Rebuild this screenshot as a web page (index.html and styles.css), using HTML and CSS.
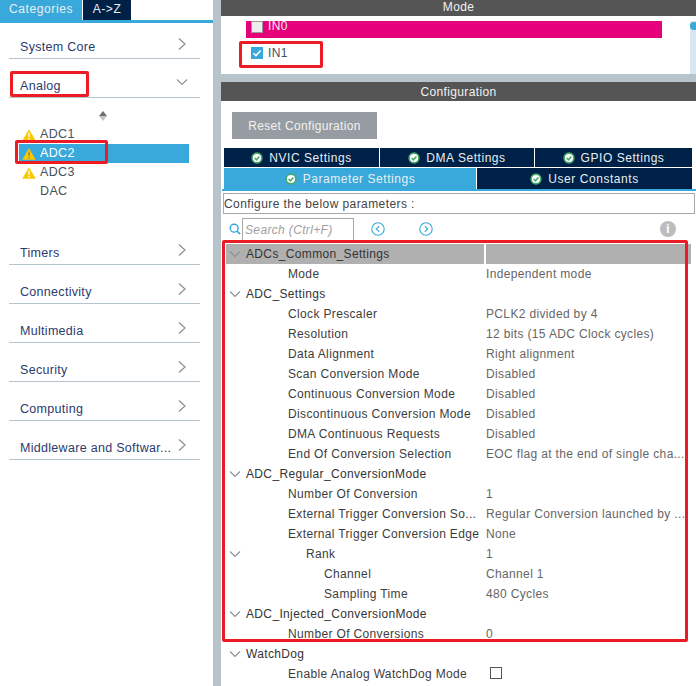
FILE: index.html
```html
<!DOCTYPE html>
<html lang="en">
<head>
<meta charset="UTF-8" />
<title>Pinout and Configuration</title>
<link rel="stylesheet" href="styles.css">
</head>
<body>
<svg class="defs" width="0" height="0">
  <symbol id="chev-right" viewBox="0 0 10 14"><path d="M2 1.5 8 7 2 12.5" fill="none" stroke="#8a8f94" stroke-width="1.2"/></symbol>
  <symbol id="chev-down" viewBox="0 0 12 8"><path d="M1 1.5 6 6.5 11 1.5" fill="none" stroke="#8a8f94" stroke-width="1.1"/></symbol>
  <symbol id="warn" viewBox="0 0 14 12"><path d="M7 .3 13.8 11.7H.2Z" fill="#fbc800"/><path d="M6.3 3.4h1.4v4.6H6.3ZM6.3 9h1.4v1.5H6.3Z" fill="currentColor"/></symbol>
  <symbol id="ok" viewBox="0 0 12 12"><circle cx="6" cy="6" r="4.9" fill="#fff" stroke="#45a86a" stroke-width="1.6"/><path d="M3.6 6 5.4 7.8 8.4 4.4" fill="none" stroke="#45a86a" stroke-width="1.5"/></symbol>
</svg>

<div class="sidebar">
  <div class="side-tabs">
    <div class="side-tab active">Categories</div>
    <div class="side-tab">A-&gt;Z</div>
  </div>
  <div class="cat first"><span>System Core</span><svg class="chev"><use href="#chev-right"/></svg></div>
  <div class="cat"><span>Analog</span><svg class="chev-d"><use href="#chev-down"/></svg></div>
  <div class="sort"><i class="up"></i><i class="down"></i></div>
  <ul class="ip-list">
    <li><svg class="warn"><use href="#warn"/></svg>ADC1</li>
    <li class="selected"><svg class="warn"><use href="#warn"/></svg>ADC2</li>
    <li><svg class="warn"><use href="#warn"/></svg>ADC3</li>
    <li>DAC</li>
  </ul>
  <div class="cat"><span>Timers</span><svg class="chev"><use href="#chev-right"/></svg></div>
  <div class="cat"><span>Connectivity</span><svg class="chev"><use href="#chev-right"/></svg></div>
  <div class="cat"><span>Multimedia</span><svg class="chev"><use href="#chev-right"/></svg></div>
  <div class="cat"><span>Security</span><svg class="chev"><use href="#chev-right"/></svg></div>
  <div class="cat"><span>Computing</span><svg class="chev"><use href="#chev-right"/></svg></div>
  <div class="cat"><span>Middleware and Softwar...</span><svg class="chev"><use href="#chev-right"/></svg></div>
</div>

<div class="main">
  <div class="bar mode-bar">Mode</div>
  <div class="mode-panel">
    <div class="in-row in0"><span class="box"></span><span class="in0-label">IN0</span></div>
    <div class="in-row in1"><span class="box checked"><svg viewBox="0 0 12 12"><path d="M2.5 6.2 5 8.6 9.6 3.4" fill="none" stroke="#fff" stroke-width="1.5"/></svg></span>IN1</div>
    <div class="scroll-track"><span class="scroll-thumb"></span></div>
  </div>
  <div class="bar config-bar">Configuration</div>
  <div class="config">
    <div class="reset-btn">Reset Configuration</div>
    <div class="tab-block">
      <div class="tabs tabs-top">
        <div class="tab w-a"><svg class="ok"><use href="#ok"/></svg>NVIC Settings</div>
        <div class="tab w-b"><svg class="ok"><use href="#ok"/></svg>DMA Settings</div>
        <div class="tab w-c"><svg class="ok"><use href="#ok"/></svg>GPIO Settings</div>
      </div>
      <div class="tabs tabs-bottom">
        <div class="tab active w-d"><svg class="ok"><use href="#ok"/></svg>Parameter Settings</div>
        <div class="tab w-e"><svg class="ok"><use href="#ok"/></svg>User Constants</div>
      </div>
    </div>
    <div class="describe">Configure the below parameters :</div>
    <div class="search-row">
      <svg class="search-icon" viewBox="0 0 14 14"><circle cx="6" cy="6" r="4.6" fill="none" stroke="#39a9db" stroke-width="1.6"/><path d="M9.2 9.2 13 13" stroke="#39a9db" stroke-width="1.8"/></svg>
      <div class="search-box">Search (Ctrl+F)</div>
      <svg class="nav prev" viewBox="0 0 14 14"><circle cx="7" cy="7" r="6.2" fill="none" stroke="#39a9db" stroke-width="1.1"/><path d="M8.2 4.2 5.4 7 8.2 9.8" fill="none" stroke="#39a9db" stroke-width="1.2"/></svg>
      <svg class="nav next" viewBox="0 0 14 14"><circle cx="7" cy="7" r="6.2" fill="none" stroke="#39a9db" stroke-width="1.1"/><path d="M5.8 4.2 8.6 7 5.8 9.8" fill="none" stroke="#39a9db" stroke-width="1.2"/></svg>
      <div class="info">i</div>
    </div>
    <div class="tree">
      <div class="row group head"><svg class="tw"><use href="#chev-down"/></svg><span class="name">ADCs_Common_Settings</span><span class="val"></span></div>
      <div class="row"><span class="name l1">Mode</span><span class="val">Independent mode</span></div>
      <div class="row group"><svg class="tw"><use href="#chev-down"/></svg><span class="name">ADC_Settings</span></div>
      <div class="row"><span class="name l1">Clock Prescaler</span><span class="val">PCLK2 divided by 4</span></div>
      <div class="row"><span class="name l1">Resolution</span><span class="val">12 bits (15 ADC Clock cycles)</span></div>
      <div class="row"><span class="name l1">Data Alignment</span><span class="val">Right alignment</span></div>
      <div class="row"><span class="name l1">Scan Conversion Mode</span><span class="val">Disabled</span></div>
      <div class="row"><span class="name l1">Continuous Conversion Mode</span><span class="val">Disabled</span></div>
      <div class="row"><span class="name l1">Discontinuous Conversion Mode</span><span class="val">Disabled</span></div>
      <div class="row"><span class="name l1">DMA Continuous Requests</span><span class="val">Disabled</span></div>
      <div class="row"><span class="name l1">End Of Conversion Selection</span><span class="val">EOC flag at the end of single cha...</span></div>
      <div class="row group"><svg class="tw"><use href="#chev-down"/></svg><span class="name">ADC_Regular_ConversionMode</span></div>
      <div class="row"><span class="name l1">Number Of Conversion</span><span class="val">1</span></div>
      <div class="row"><span class="name l1">External Trigger Conversion So...</span><span class="val">Regular Conversion launched by ...</span></div>
      <div class="row"><span class="name l1">External Trigger Conversion Edge</span><span class="val">None</span></div>
      <div class="row"><svg class="tw"><use href="#chev-down"/></svg><span class="name l2">Rank</span><span class="val">1</span></div>
      <div class="row"><span class="name l3">Channel</span><span class="val">Channel 1</span></div>
      <div class="row"><span class="name l3">Sampling Time</span><span class="val">480 Cycles</span></div>
      <div class="row group"><svg class="tw"><use href="#chev-down"/></svg><span class="name">ADC_Injected_ConversionMode</span></div>
      <div class="row"><span class="name l1">Number Of Conversions</span><span class="val">0</span></div>
      <div class="row group"><svg class="tw"><use href="#chev-down"/></svg><span class="name">WatchDog</span></div>
      <div class="row"><span class="name l1">Enable Analog WatchDog Mode</span><span class="val"><span class="plain-check"></span></span></div>
    </div>
  </div>
</div>

<div class="mark mark-analog"></div>
<div class="mark mark-adc2"></div>
<div class="mark mark-in1"></div>
<div class="mark mark-table"></div>
</body>
</html>
```

FILE: styles.css
```css
html, body {
  margin: 0;
  height: 686px;
  overflow: hidden;
}
body {
  position: relative;
  display: flex;
  background-color: #b8c4cc;
  font-family: "Liberation Sans", Arial, sans-serif;
  font-size: 12px;
  letter-spacing: 0.35px;
  color: #333;
}
.defs {
  position: absolute;
}

/* left panel */
.sidebar {
  width: 213px;
  height: 686px;
  margin-right: 8px;
  flex-shrink: 0;
  background-color: #fff;
}
.side-tabs {
  display: flex;
  gap: 1px;
  height: 20px;
  border-bottom: 3px solid #39a9db;
}
.side-tab {
  width: 48px;
  background-color: #002147;
  color: #e8eef2;
  line-height: 19px;
  text-align: center;
  letter-spacing: 0.6px;
}
.side-tab.active {
  width: 82px;
  background-color: #39a9db;
}
.cat {
  display: flex;
  justify-content: space-between;
  align-items: center;
  box-sizing: border-box;
  width: 191px;
  height: 39px;
  margin-left: 9px;
  padding: 16px 13px 0 11px;
  border-bottom: 1px solid #b8c4cc;
  color: #2c3a6e;
  font-size: 12.5px;
  letter-spacing: 0.3px;
}
.cat.first {
  height: 36px;
  padding-top: 13px;
}
.chev {
  width: 10px;
  height: 14px;
  margin-top: -6px;
}
.chev-d {
  width: 12px;
  height: 8px;
  margin-top: -8px;
  margin-right: -1px;
}
.sort {
  display: flex;
  flex-direction: column;
  align-items: center;
  width: 8px;
  height: 10px;
  margin: 13px 0 0 99px;
}
.sort i {
  width: 0;
  height: 0;
  border-left: 4px solid transparent;
  border-right: 4px solid transparent;
}
.sort .up {
  border-bottom: 5px solid #707070;
}
.sort .down {
  border-top: 5px solid #c4c4c4;
}
.ip-list {
  list-style: none;
  margin: 4px 0 25px 19px;
  padding: 0;
  width: 170px;
}
.ip-list li {
  display: flex;
  align-items: center;
  box-sizing: border-box;
  height: 19px;
  padding: 0 0 2px 21px;
  position: relative;
  color: #44505c;
  font-size: 12.5px;
}
.ip-list li.selected {
  background-color: #39a9db;
  color: #fff;
}
.warn {
  position: absolute;
  left: 3px;
  top: 4px;
  width: 14px;
  height: 12px;
  color: #fff;
}
.selected .warn {
  color: #9a8a3a;
}

/* right panel */
.main {
  width: 475px;
  height: 686px;
}
.bar {
  background-color: #555;
  color: #f2f2f2;
  text-align: center;
}
.mode-bar {
  height: 16px;
  line-height: 15px;
}
.config-bar {
  height: 19px;
  line-height: 21px;
}
.mode-panel {
  position: relative;
  display: flow-root;
  height: 58px;
  margin-bottom: 8px;
  background-color: #fff;
}
.in-row {
  display: flex;
  align-items: center;
  gap: 5px;
  color: #44505c;
}
.in0 {
  height: 17px;
  margin: 5px 34px 0 25px;
  padding-left: 5px;
  background-color: #e6007a;
  color: #eee;
  align-items: flex-start;
}
.in0-label {
  line-height: 11px;
}
.in1 {
  height: 16px;
  margin: 7px 0 0 30px;
}
.box {
  box-sizing: border-box;
  width: 12px;
  height: 12px;
  background-color: #eee;
  border: 1px solid #999;
}
.box.checked {
  background-color: #39a9db;
  border: 0;
}
.box svg {
  display: block;
}
.scroll-track {
  position: absolute;
  right: 0;
  top: 5px;
  bottom: 0;
  width: 6px;
  background-color: #d8e6f4;
  overflow: hidden;
}
.scroll-thumb {
  display: block;
  width: 8px;
  height: 8px;
  margin-top: 1px;
  background-color: #39a9db;
  border-radius: 50%;
}
.config {
  height: 585px;
  background-color: #fff;
  overflow: hidden;
}
.reset-btn {
  width: 145px;
  height: 27px;
  margin: 11px 0 9px 11px;
  background-color: #969ca1;
  color: #f2f2f2;
  line-height: 29px;
  text-align: center;
}
.tab-block {
  margin-left: 1px;
  padding-left: 2px;
  border-bottom: 2px solid #39a9db;
}
.tabs {
  display: flex;
  gap: 1px;
  width: 468px;
  color: #e8eef2;
  letter-spacing: 0.55px;
}
.tab {
  display: flex;
  justify-content: center;
  align-items: center;
  gap: 6px;
  background-color: #002147;
}
.tab.active {
  background-color: #39a9db;
}
.tabs-top {
  height: 19px;
  margin-bottom: 1px;
}
.tabs-top .tab {
  padding-top: 1px;
}
.tabs-bottom {
  height: 21px;
}
.w-a { width: 155px; }
.w-b { width: 154px; }
.w-c { width: 157px; }
.w-d { width: 252px; }
.w-e { width: 215px; }
.ok {
  width: 12px;
  height: 12px;
}
.describe {
  box-sizing: border-box;
  width: 472px;
  height: 21px;
  margin: 2px 0 0 2px;
  border: 1px solid #a9a9a9;
  line-height: 20px;
  color: #444;
  letter-spacing: 0.42px;
}
.search-row {
  display: flex;
  align-items: center;
  height: 22px;
  margin: 4px 0 0 8px;
}
.search-icon {
  width: 12px;
  height: 12px;
  margin-right: 1px;
}
.search-box {
  box-sizing: border-box;
  width: 112px;
  height: 22px;
  padding-left: 2px;
  border: 1px solid #a9a9a9;
  border-bottom: 0;
  color: #a0a0a0;
  font-style: italic;
  line-height: 22px;
}
.nav {
  width: 14px;
  height: 14px;
  flex-shrink: 0;
}
.prev {
  margin-left: 17px;
}
.next {
  margin-left: 34px;
}
.info {
  width: 16px;
  height: 16px;
  margin-left: 227px;
  border-radius: 50%;
  background-color: #bdbdbd;
  color: #fff;
  font-weight: bold;
  font-size: 13px;
  line-height: 16px;
  text-align: center;
}
.tree {
  margin: 4px 0 0 5px;
}
.row {
  position: relative;
  display: flex;
  height: 20px;
  line-height: 21px;
  color: #3c3c3c;
}
.row.head {
  width: 465px;
  background-color: #b0b0b0;
}
.row.head .name {
  width: 258px;
}
.row.head .val {
  border-left: 2px solid #fff;
}
.tw {
  position: absolute;
  left: 3px;
  top: 6px;
  width: 12px;
  height: 8px;
}
.name {
  box-sizing: border-box;
  width: 260px;
  padding-left: 20px;
  flex-shrink: 0;
  white-space: nowrap;
}
.group .name {
  color: #333;
}
.name.l1 { padding-left: 62px; }
.name.l2 { padding-left: 80px; }
.name.l3 { padding-left: 98px; }
.val {
  flex-grow: 1;
  color: #666;
  white-space: nowrap;
}
.plain-check {
  display: inline-block;
  box-sizing: border-box;
  width: 12px;
  height: 12px;
  margin: 3px 0 0 4px;
  border: 1px solid #555;
}

/* red annotation boxes drawn on top of the screenshot */
.mark {
  position: absolute;
  box-sizing: border-box;
  border: 3px solid #ed1c24;
  border-radius: 2px;
}
.mark-analog { left: 10px; top: 71px; width: 79px; height: 26px; }
.mark-adc2 { left: 15px; top: 140px; width: 93px; height: 24px; }
.mark-in1 { left: 239px; top: 41px; width: 84px; height: 27px; }
.mark-table { left: 222px; top: 240px; width: 466px; height: 402px; }
```
